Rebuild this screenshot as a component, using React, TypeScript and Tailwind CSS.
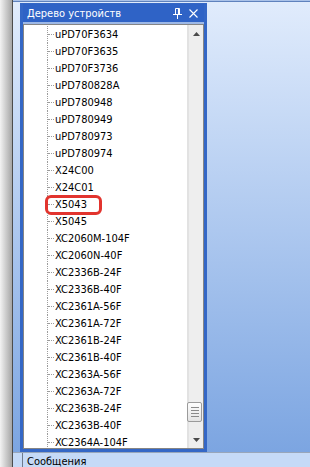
import React from 'react';

const devices = [
  'uPD70F3634', 'uPD70F3635', 'uPD70F3736', 'uPD780828A', 'uPD780948', 'uPD780949',
  'uPD780973', 'uPD780974', 'X24C00', 'X24C01', 'X5043', 'X5045', 'XC2060M-104F',
  'XC2060N-40F', 'XC2336B-24F', 'XC2336B-40F', 'XC2361A-56F', 'XC2361A-72F',
  'XC2361B-24F', 'XC2361B-40F', 'XC2363A-56F', 'XC2363A-72F', 'XC2363B-24F',
  'XC2363B-40F', 'XC2364A-104F',
];

const PinIcon = () => (
  <svg width="9" height="11" viewBox="0 0 9 11" className="block">
    <path d="M2.5 0.5h4v6h-4z" fill="none" stroke="#fff" strokeWidth="1" />
    <path d="M5.5 0.5v6" stroke="#fff" strokeWidth="1.2" />
    <path d="M0 6.5h9" stroke="#fff" strokeWidth="1" />
    <path d="M4.5 7v4" stroke="#fff" strokeWidth="1" />
  </svg>
);

const CloseIcon = () => (
  <svg width="9" height="9" viewBox="0 0 9 9" className="block">
    <path d="M0.5 0.5l8 8M8.5 0.5l-8 8" stroke="#fff" strokeWidth="1.1" />
  </svg>
);

const Arrow = ({ up }: { up?: boolean }) => (
  <svg width="7" height="4" viewBox="0 0 7 4" className="block">
    <path d={up ? 'M3.5 0L7 4H0z' : 'M0 0h7L3.5 4z'} fill="#4a4a4a" />
  </svg>
);

export default function App() {
  return (
    <div className="w-[310px] h-[467px] flex overflow-hidden font-['DejaVu_Sans_Condensed','Liberation_Sans',sans-serif] text-[11px] leading-[13px]">
      <div className="w-[12px] h-full bg-linear-to-r from-[#f3f3f3] to-[#a6a6a6]" />
      <div className="w-px h-full bg-[#4c4c4c]" />

      <div className="flex-1 flex flex-col min-w-0">
        <div className="h-[452px] flex flex-col bg-linear-to-b from-[#e1ecfc] to-[#7ca5e1]">
          <div className="h-[2px] bg-[#aac2e8] border-b border-[#5f82bd]" />
          <div className="flex-1 flex pl-[7px] pt-px">
            {/* Дерево устройств */}
            <div className="w-[187px] h-[449px] flex flex-col bg-[#3467c6] pt-px px-[3px] pb-[3px]">
              <div className="h-[18px] flex items-center bg-[#2f63c6] text-white pl-[4px] pr-[6px]">
                <span className="flex-1">Дерево устройств</span>
                <div className="mr-[7px]"><PinIcon /></div>
                <CloseIcon />
              </div>
              <div className="h-[2px] bg-[#9db8e6]" />
              <div className="flex-1 flex border border-[#858585] bg-white min-h-0">
                <div className="flex-1 overflow-hidden pt-px">
                  {devices.map((d) => (
                    <div key={d} className="relative h-[17px] flex items-center">
                      <div className="ml-[23px] w-[7px] self-stretch flex items-center border-l border-dotted border-[#9c9c9c]">
                        <div className="w-full h-0 border-t border-dotted border-[#9c9c9c]" />
                      </div>
                      <span className="ml-px text-black whitespace-nowrap">{d}</span>
                      {d === 'X5043' && (
                        <div className="absolute left-[21px] -top-px w-[57px] h-[20px] border-[3px] border-[#e2342e] rounded-[6px]" />
                      )}
                    </div>
                  ))}
                </div>
                {/* scrollbar */}
                <div className="w-[16px] flex flex-col bg-[#eeeeee] border-l-2 border-[#e2e2e2]">
                  <div className="h-[17px] flex items-center justify-center pt-px"><Arrow up /></div>
                  <div className="flex-1 flex flex-col justify-end pb-[9px]">
                    <div className="h-[20px] mr-px -ml-[2px] rounded-[2px] border border-[#9b9b9b] bg-linear-to-b from-[#fdfdfd] to-[#e4e4e4] flex flex-col items-center justify-center gap-[2px]">
                      <div className="w-[8px] h-px bg-[#8a8a8a]" />
                      <div className="w-[8px] h-px bg-[#8a8a8a]" />
                      <div className="w-[8px] h-px bg-[#8a8a8a]" />
                      <div className="w-[8px] h-px bg-[#8a8a8a]" />
                    </div>
                  </div>
                  <div className="h-[17px] flex items-center justify-center"><Arrow /></div>
                </div>
              </div>
            </div>
          </div>
        </div>

        {/* Сообщения */}
        <div className="h-[15px] flex bg-[#c5daf7] border-t border-[#98a6ba] pl-[9px]">
          <div className="flex-1 border-l border-[#6e7a8c] pl-[4px] pt-[2px] text-black">Сообщения</div>
        </div>
      </div>
    </div>
  );
}
